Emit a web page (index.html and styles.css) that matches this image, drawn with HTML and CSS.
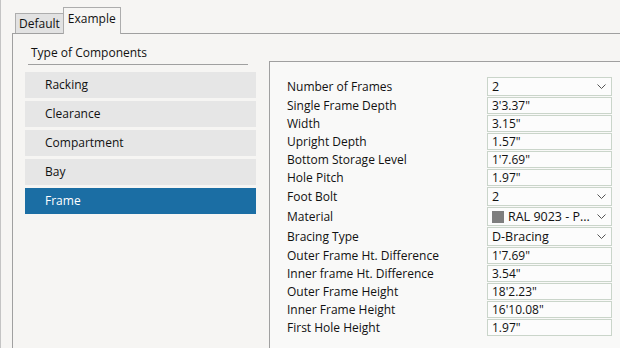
FILE: index.html
```html
<!DOCTYPE html>
<html>

<head>
    <title>Components</title>
    <link rel="stylesheet" href="styles.css">
</head>

<body>
    <div class="window">
        <div class="tabs">
            <div class="tab">Default</div>
            <div class="tab active">Example</div>
        </div>
        <div class="tabpanel">
            <div class="sidebar">
                <div class="heading">Type of Components</div>
                <div class="type">Racking</div>
                <div class="type">Clearance</div>
                <div class="type">Compartment</div>
                <div class="type">Bay</div>
                <div class="type selected">Frame</div>
            </div>
            <div class="props">
                <div class="row tall">
                    <span class="label">Number of Frames</span>
                    <div class="field select"><span class="val">2</span><svg class="chev" viewBox="0 0 9 5"><polyline points="0.5,0.5 4.5,4.5 8.5,0.5" /></svg></div>
                </div>
                <div class="row">
                    <span class="label">Single Frame Depth</span>
                    <div class="field">3'3.37"</div>
                </div>
                <div class="row">
                    <span class="label">Width</span>
                    <div class="field">3.15"</div>
                </div>
                <div class="row">
                    <span class="label">Upright Depth</span>
                    <div class="field">1.57"</div>
                </div>
                <div class="row">
                    <span class="label">Bottom Storage Level</span>
                    <div class="field">1'7.69"</div>
                </div>
                <div class="row">
                    <span class="label">Hole Pitch</span>
                    <div class="field">1.97"</div>
                </div>
                <div class="row tall">
                    <span class="label">Foot Bolt</span>
                    <div class="field select"><span class="val">2</span><svg class="chev" viewBox="0 0 9 5"><polyline points="0.5,0.5 4.5,4.5 8.5,0.5" /></svg></div>
                </div>
                <div class="row tall">
                    <span class="label">Material</span>
                    <div class="field select"><span class="swatch"></span><span class="val">RAL 9023 - P...</span><svg class="chev" viewBox="0 0 9 5"><polyline points="0.5,0.5 4.5,4.5 8.5,0.5" /></svg></div>
                </div>
                <div class="row tall">
                    <span class="label">Bracing Type</span>
                    <div class="field select"><span class="val">D-Bracing</span><svg class="chev" viewBox="0 0 9 5"><polyline points="0.5,0.5 4.5,4.5 8.5,0.5" /></svg></div>
                </div>
                <div class="row">
                    <span class="label">Outer Frame Ht. Difference</span>
                    <div class="field">1'7.69"</div>
                </div>
                <div class="row">
                    <span class="label">Inner frame Ht. Difference</span>
                    <div class="field">3.54"</div>
                </div>
                <div class="row">
                    <span class="label">Outer Frame Height</span>
                    <div class="field">18'2.23"</div>
                </div>
                <div class="row">
                    <span class="label">Inner Frame Height</span>
                    <div class="field">16'10.08"</div>
                </div>
                <div class="row">
                    <span class="label">First Hole Height</span>
                    <div class="field">1.97"</div>
                </div>
            </div>
        </div>
    </div>
</body>

</html>
```
FILE: styles.css
```css
html {
    --lineColor: #a0a0a0;
    --panelBg: #f6f5f3;
    --selColor: #1b6ea4;
    --fieldBorder: #cad5ca;
}

html,
body {
    margin: 0;
    height: 100%;
    overflow: hidden;
}

body {
    background: var(--panelBg);
    font-family: "Open Sans", "Noto Sans", sans-serif;
    font-size: 12px;
    color: #111111;
}

.window {
    height: 100%;
    display: flex;
    flex-direction: column;
    border-left: 1px solid #c4c4c4;
}

.tabs {
    height: 33px;
    display: flex;
    align-items: flex-end;
    padding-left: 14px;
    flex-shrink: 0;
}

.tab {
    height: 19px;
    line-height: 20px;
    padding: 0 3px;
    border: 1px solid #adadad;
    border-bottom: none;
    background: #e2e2e2;
}

.tab.active {
    position: relative;
    z-index: 1;
    height: 26px;
    line-height: 22px;
    margin-left: -1px;
    margin-bottom: -1px;
    padding: 0 4px;
    background: var(--panelBg);
}

.tabpanel {
    flex: 1;
    display: flex;
    margin-left: 11px;
    border-left: 1px solid var(--lineColor);
    border-top: 1px solid var(--lineColor);
}

.sidebar {
    width: 231px;
    padding: 11px 0 0 12px;
    flex-shrink: 0;
}

.heading {
    width: 217px;
    margin: 0 0 7px 3px;
    padding: 0 0 3px 3px;
    line-height: 16px;
    border-bottom: 1px solid var(--lineColor);
}

.type {
    height: 26px;
    line-height: 26px;
    margin-bottom: 3px;
    padding-left: 20px;
    background: #e6e6e6;
}

.type.selected {
    background: var(--selColor);
    color: white;
}

.props {
    flex: 1;
    margin: 27px 0 0 13px;
    padding: 15px 0 0 17px;
    border-left: 1px solid var(--lineColor);
    border-top: 1px solid var(--lineColor);
    background: #f9f9f8;
}

.row {
    display: flex;
    height: 18px;
}

.row.tall {
    height: 20px;
}

.label {
    width: 200px;
    height: 17px;
    line-height: 17px;
}

.tall .label {
    height: 19px;
    line-height: 19px;
}

.field {
    box-sizing: border-box;
    width: 125px;
    height: 17px;
    line-height: 15px;
    padding-left: 4px;
    border: 1px solid var(--fieldBorder);
    background: #fcfcfc;
    display: flex;
    align-items: center;
}

.select {
    height: 19px;
    padding-right: 5px;
}

.select .val {
    flex: 1;
    font-size: 12.5px;
}

.swatch {
    width: 12px;
    height: 12px;
    margin-right: 4px;
    background: #7e7e7e;
}

.chev {
    width: 9px;
    height: 5px;
    fill: none;
    stroke: #555555;
    stroke-width: 1;
}
```
